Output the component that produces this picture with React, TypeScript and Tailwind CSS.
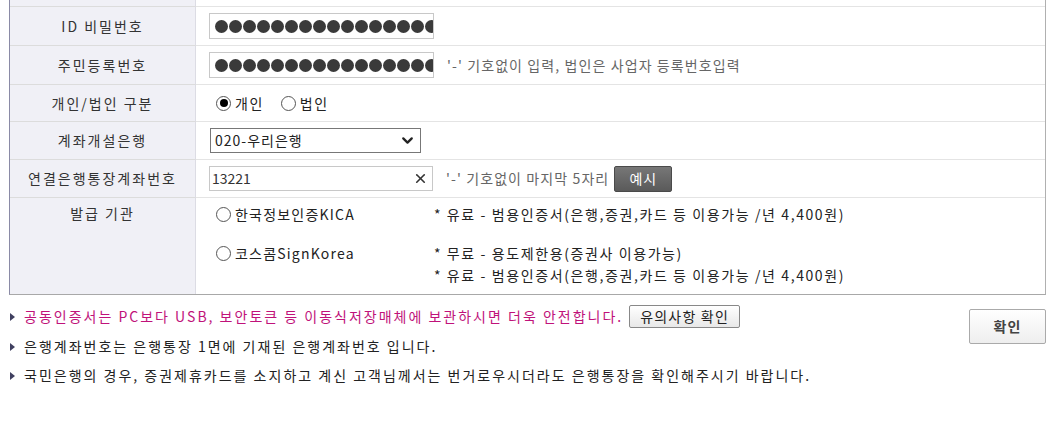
import { ChevronDown, X } from 'lucide-react'

const font = { fontFamily: '"Noto Sans CJK KR", "Noto Sans", sans-serif' }

function Label({ children, top, last }: { children: React.ReactNode; top?: boolean; last?: boolean }) {
  return (
    <div
      className={`bg-[#f0f0f6] border-r border-r-[#dcdce4] ${last ? '' : 'border-b border-b-[#dcdcdc]'} flex justify-center ${top ? 'items-start pt-[5px]' : 'items-center'} text-[14px] tracking-[2px] text-[#333]`}
    >
      {children}
    </div>
  )
}

function Dots() {
  return (
    <div className="w-[225px] h-[26px] border border-[#c8c8c8] bg-white overflow-hidden flex items-center pl-[5px] gap-px">
      {Array.from({ length: 17 }).map((_, i) => (
        <span key={i} className="shrink-0 w-[13px] h-[13px] rounded-full bg-[#3a3a3a]" />
      ))}
    </div>
  )
}

function Radio({ checked }: { checked?: boolean }) {
  return (
    <span className="inline-flex w-[15px] h-[15px] rounded-full border border-[#555] bg-white items-center justify-center mr-[4px] shrink-0">
      {checked && <span className="w-[8px] h-[8px] rounded-full bg-black" />}
    </span>
  )
}

function Bullet() {
  return (
    <span className="w-0 h-0 border-y-[4px] border-y-transparent border-l-[5px] border-l-[#404060] mr-[9px] shrink-0" />
  )
}

export default function App() {
  return (
    <div className="w-[1056px] h-[444px] bg-white text-[#333] overflow-hidden" style={font}>
      <div className="ml-[9px] w-[1037px] border-l border-l-[#8a8aa6] border-r border-r-[#b0b0b0] border-b border-b-[#a8a8a8] grid grid-cols-[186px_1fr]">
        {/* cut off top row */}
        <div className="h-[7px] bg-[#f0f0f6] border-r border-r-[#dcdce4] border-b border-b-[#dcdcdc]" />
        <div className="h-[7px] border-b border-[#e4e4e4]" />

        <Label>ID 비밀번호</Label>
        <div className="h-[39px] border-b border-[#e4e4e4] flex items-center pl-[13px]">
          <Dots />
        </div>

        <Label>주민등록번호</Label>
        <div className="h-[39px] border-b border-[#e4e4e4] flex items-center pl-[13px]">
          <Dots />
          <span className="ml-[13px] text-[14px] tracking-[1.1px] text-[#666]">'-' 기호없이 입력, 법인은 사업자 등록번호입력</span>
        </div>

        <Label>개인/법인 구분</Label>
        <div className="h-[37px] border-b border-[#e4e4e4] flex items-center pl-[20px] text-[14px] tracking-[1.5px] text-[#222]">
          <Radio checked />
          <span className="mr-[17px]">개인</span>
          <Radio />
          <span>법인</span>
        </div>

        <Label>계좌개설은행</Label>
        <div className="h-[38px] border-b border-[#e4e4e4] flex items-center pl-[14px]">
          <div className="w-[211px] h-[25px] border border-[#777] bg-white flex items-center justify-between pl-[4px] pr-[4px] text-[14px] tracking-[1px] text-[#222]">
            <span>020-우리은행</span>
            <ChevronDown size={17} strokeWidth={3.2} className="text-[#222]" />
          </div>
        </div>

        <Label>연결은행통장계좌번호</Label>
        <div className="h-[38px] border-b border-[#e4e4e4] flex items-center pl-[13px]">
          <div className="w-[224px] h-[25px] border border-[#c8c8c8] bg-white flex items-center justify-between pl-[2px] pr-[4px] text-[14px] text-[#333]">
            <span>13221</span>
            <X size={15} strokeWidth={2.6} className="text-[#333]" />
          </div>
          <span className="ml-[13px] text-[14px] tracking-[1.1px] text-[#666]">'-' 기호없이 마지막 5자리</span>
          <span className="ml-[5px] w-[58px] h-[26px] rounded-[2px] bg-gradient-to-b from-[#777] to-[#5a5a5a] border border-[#4a4a4a] text-white text-[14px] tracking-[1px] flex items-center justify-center">예시</span>
        </div>

        <Label top last>발급 기관</Label>
        <div className="h-[96px] grid grid-cols-[218px_1fr] pl-[20px] pt-[5px] text-[14px] tracking-[1.6px] text-[#222] leading-[22px]">
          <div className="flex items-center h-[22px] tracking-[1.2px]"><Radio />한국정보인증KICA</div>
          <div>* 유료 - 범용인증서(은행,증권,카드 등 이용가능 /년 4,400원)</div>
          <div className="flex items-center h-[22px] mt-[9px] tracking-[1.2px]"><Radio />코스콤SignKorea</div>
          <div className="mt-[9px]">
            <div>* 무료 - 용도제한용(증권사 이용가능)</div>
            <div>* 유료 - 범용인증서(은행,증권,카드 등 이용가능 /년 4,400원)</div>
          </div>
        </div>
      </div>

      <div className="flex justify-between pl-[10px] pr-[10px] mt-[13px]">
        <div className="flex flex-col gap-[8px] text-[14px] tracking-[2px] leading-[21px] -mt-[3px]">
          <div className="flex items-center">
            <Bullet />
            <span className="text-[#c0127a]">공동인증서는 PC보다 USB, 보안토큰 등 이동식저장매체에 보관하시면 더욱 안전합니다.</span>
            <span className="ml-[6px] h-[23px] px-[10px] border border-[#888] rounded-[2px] bg-gradient-to-b from-white to-[#e8e8e8] text-[#222] tracking-[1.2px] flex items-center">유의사항 확인</span>
          </div>
          <div className="flex items-center">
            <Bullet />
            <span className="text-[#222]">은행계좌번호는 은행통장 1면에 기재된 은행계좌번호 입니다.</span>
          </div>
          <div className="flex items-center">
            <Bullet />
            <span className="text-[#222]">국민은행의 경우, 증권제휴카드를 소지하고 계신 고객님께서는 번거로우시더라도 은행통장을 확인해주시기 바랍니다.</span>
          </div>
        </div>
        <span className="w-[77px] h-[35px] mt-[1px] border border-[#aaa] rounded-[2px] bg-gradient-to-b from-white to-[#eeeeee] text-[14px] tracking-[1px] font-bold text-[#444] flex items-center justify-center">확인</span>
      </div>
    </div>
  )
}
